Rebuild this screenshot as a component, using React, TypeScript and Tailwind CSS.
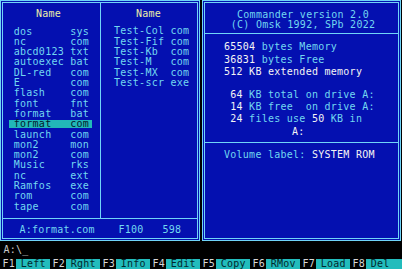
import type { ReactNode } from "react"

const files: [string, string][] = [
  ["dos", "sys"],
  ["nc", "com"],
  ["abcd0123", "txt"],
  ["autoexec", "bat"],
  ["DL-red", "com"],
  ["E", "com"],
  ["flash", "com"],
  ["font", "fnt"],
  ["format", "bat"],
  ["format", "com"],
  ["launch", "com"],
  ["mon2", "mon"],
  ["mon2", "com"],
  ["Music", "rks"],
  ["nc", "ext"],
  ["Ramfos", "exe"],
  ["rom", "com"],
  ["tape", "com"],
]

const tests: [string, string][] = [
  ["Test-Col", "com"],
  ["Test-Fif", "com"],
  ["Test-Kb", "com"],
  ["Test-M", "com"],
  ["Test-MX", "com"],
  ["Test-scr", "exe"],
]

const keys = ["Left", "Rght", "Info", "Edit", "Copy", "RMov", "Load", "Del"]

function Frame({ className, children }: { className: string; children: ReactNode }) {
  return (
    <div className={`${className} h-full border border-[#70d4f8] bg-[#0410b0] p-px`}>
      <div className="flex h-full flex-col border border-[#70d4f8]">{children}</div>
    </div>
  )
}

function FileRow({ name, ext, selected }: { name: string; ext: string; selected?: boolean }) {
  return (
    <div className="h-[10.3px] pt-[1.2px]">
      <div
        className={`ml-[6px] h-[8px] w-[83px] pl-[4.75px] leading-[8px] whitespace-pre ${
          selected ? "bg-[#22b8b8] text-[#04202c]" : "text-[#72d8f0]"
        }`}
      >
        {name.padEnd(9) + ext}
      </div>
    </div>
  )
}

function LeftPanel() {
  return (
    <>
      <div className="flex h-[215px]">
        <div className="w-[97px] pt-[5.7px]">
          <div className="h-[10.3px] pl-[33px] leading-[10.3px] text-[#ececa8]">Name</div>
          <div className="mt-[7.4px]">
            {files.map(([n, e], i) => (
              <FileRow key={i} name={n} ext={e} selected={i === 9} />
            ))}
          </div>
        </div>
        <div className="w-px bg-[#70d4f8]" />
        <div className="flex-1 pt-[5.7px]">
          <div className="h-[10.3px] pl-[35px] leading-[10.3px] text-[#ececa8]">Name</div>
          <div className="mt-[7.4px]">
            {tests.map(([n, e], i) => (
              <div key={i} className="h-[10.3px] pl-[13px] leading-[10.3px] whitespace-pre text-[#72d8f0]">
                {n.padEnd(9) + e}
              </div>
            ))}
          </div>
        </div>
      </div>
      <div className="h-px bg-[#70d4f8]" />
      <div className="flex pl-[16.5px] pt-[6.4px] leading-[10.3px] text-[#72d8f0]">
        <span>A:format.com</span>
        <span className="ml-[23.5px]">F100</span>
        <span className="ml-[19px]">598</span>
      </div>
    </>
  )
}

function RightPanel() {
  const w = "text-[#f4f4f4]"
  return (
    <>
      <div className="h-[30px] pl-[3px] pt-[6.8px] text-center leading-[10px] text-[#72d8f0]">
        <div>Commander version 2.0</div>
        <div>(C) Omsk 1992, SPb 2022</div>
      </div>
      <div className="h-px bg-[#70d4f8]" />
      <div className="h-[108px] pl-[19px] pt-[7.1px] leading-[12.4px] whitespace-pre text-[#72d8f0]">
        <div>
          <span className={w}>65504</span> bytes Memory
        </div>
        <div>
          <span className={w}>36831</span> bytes Free
        </div>
        <div className={w}>512 KB extended memory</div>
        <div className="mt-[10.2px]">
          {" "}
          <span className={w}>64</span> KB total on drive A:
        </div>
        <div>
          {" "}
          <span className={w}>14</span> KB free  on drive A:
        </div>
        <div>
          {" "}
          <span className={w}>24</span> files use <span className={w}>50</span> KB in
        </div>
        <div className={`pl-[68px] ${w}`}>A:</div>
      </div>
      <div className="h-px bg-[#70d4f8]" />
      <div className="pl-[19px] pt-[6.8px] leading-[10.3px] whitespace-pre text-[#72d8f0]">
        Volume label: <span className={w}>SYSTEM ROM</span>
      </div>
    </>
  )
}

function FnBar() {
  return (
    <div className="flex h-[10px] leading-[10px]">
      {keys.map((k, i) => (
        <div key={k} className={`flex ${i === 7 ? "flex-1" : "w-[50px]"}`}>
          <div className="w-[16px] bg-black pl-[2.4px] text-[#d8d8d8]">F{i + 1}</div>
          <div className="flex-1 bg-[#22bcbc] pl-[4.7px] text-[#03282c]">{k}</div>
        </div>
      ))}
    </div>
  )
}

export default function App() {
  return (
    <div className="h-[269px] w-[402px] overflow-hidden bg-black font-['DejaVu_Sans_Mono',monospace] text-[10px] tracking-[0.26px]">
      <div className="flex h-[241px] gap-[2px]">
        <Frame className="w-[200px]">
          <LeftPanel />
        </Frame>
        <Frame className="w-[199px]">
          <RightPanel />
        </Frame>
      </div>
      <div className="h-[18px] whitespace-pre pl-[3.5px] leading-[18px] text-[#c8c8c8]">{"A:\\_"}</div>
      <FnBar />
    </div>
  )
}
